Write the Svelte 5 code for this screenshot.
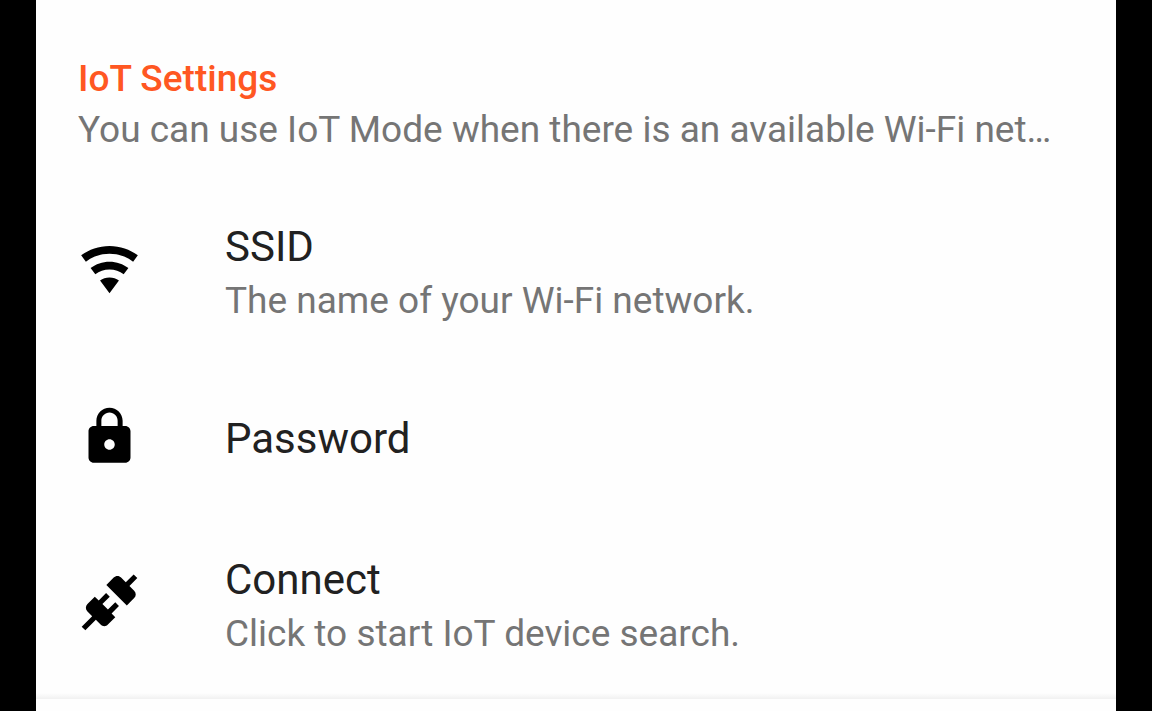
<script>
  const items = [
    { title: 'SSID', detail: 'The name of your Wi-Fi network.', icon: 'wifi' },
    { title: 'Password', detail: '', icon: 'lock' },
    { title: 'Connect', detail: 'Click to start IoT device search.', icon: 'plug' }
  ];

  const icons = {
    wifi: 'M12 21l3.600-4.800C14.600 15.450 13.350 15 12 15s-2.600.450-3.600 1.200L12 21zM12 3C7.950 3 4.210 4.340 1.200 6.600L3 9c2.500-1.880 5.620-3 9-3s6.500 1.120 9 3l1.800-2.400C19.790 4.340 16.050 3 12 3zm0 6c-2.700 0-5.190.890-7.200 2.400l1.800 2.400C8.100 12.670 9.970 12 12 12s3.900.670 5.400 1.800l1.800-2.400C17.190 9.890 14.700 9 12 9z',
    lock: 'M18 8h-1V6c0-2.760-2.240-5-5-5S7 3.240 7 6v2H6c-1.100 0-2 .9-2 2v10c0 1.100.9 2 2 2h12c1.100 0 2-.9 2-2V10c0-1.100-.9-2-2-2zm-6 9c-1.100 0-2-.9-2-2s.9-2 2-2 2 .9 2 2-.9 2-2 2zm3.100-9H8.900V6c0-1.710 1.390-3.100 3.100-3.100s3.100 1.390 3.100 3.100v2z',
    plug: 'M21.400 7.500C22.200 8.300 22.200 9.600 21.400 10.300L18.600 13.100 10.800 5.300 13.600 2.500C14.400 1.700 15.700 1.700 16.400 2.500L18.200 4.300 21.200 1.300 22.600 2.700 19.600 5.700 21.400 7.500M15.600 13.300L14.200 11.900 11.400 14.700 9.300 12.600 12.100 9.800 10.700 8.400 7.900 11.200 6.400 9.800 3.600 12.600C2.800 13.400 2.800 14.700 3.600 15.400L5.400 17.200 1.400 21.200 2.800 22.600 6.800 18.600 8.600 20.400C9.400 21.200 10.700 21.200 11.400 20.400L14.200 17.600 12.800 16.200 15.600 13.300z'
  };
</script>

<div class="frame">
  <main>
    <section>
      <header>
        <h2>IoT Settings</h2>
        <p>You can use IoT Mode when there is an available Wi-Fi net…</p>
      </header>
      <ul>
        {#each items as item}
          <li>
            <button type="button" class:single={!item.detail}>
              <svg viewBox="0 0 24 24" aria-hidden="true">
                <path d={icons[item.icon]} />
              </svg>
              <span class="copy">
                <span class="title">{item.title}</span>
                {#if item.detail}<span class="detail">{item.detail}</span>{/if}
              </span>
            </button>
          </li>
        {/each}
      </ul>
    </section>
  </main>
</div>

<style>
  :global(body) { margin: 0; background: #000; }
  .frame { padding: 0 36px; font-family: Roboto, sans-serif; }
  main { min-height: 100vh; background: #fefefe; }
  section { padding: 57px 0 3px; background: linear-gradient(#fefefe, #f1f1f1) bottom / 100% 6px no-repeat; }
  header { padding: 0 42px; }
  h2 { margin: 0; color: #ff5722; font-size: 37px; font-weight: 500; line-height: 44px; }
  p { margin: 7px 0 0; color: #757575; font-size: 37px; line-height: 44px; white-space: nowrap; overflow: hidden; text-overflow: ellipsis; }
  ul { margin: 24px 0 0; padding: 0; list-style: none; }
  button { display: grid; grid-template-columns: 63px minmax(0, 1fr); column-gap: 84px; align-items: center; width: 100%; min-height: 187px; padding: 0 42px; border: 0; background: transparent; color: #000; font: inherit; text-align: left; cursor: pointer; }
  button.single { min-height: 146px; }
  svg { width: 63px; height: 63px; fill: currentColor; }
  .copy { display: flex; flex-direction: column; gap: 4px; padding-top: 9px; }
  .single .copy { padding-top: 6px; }
  .title { color: #212121; font-size: 42px; line-height: 50px; }
  .detail { color: #757575; font-size: 37px; line-height: 50px; }
</style>
